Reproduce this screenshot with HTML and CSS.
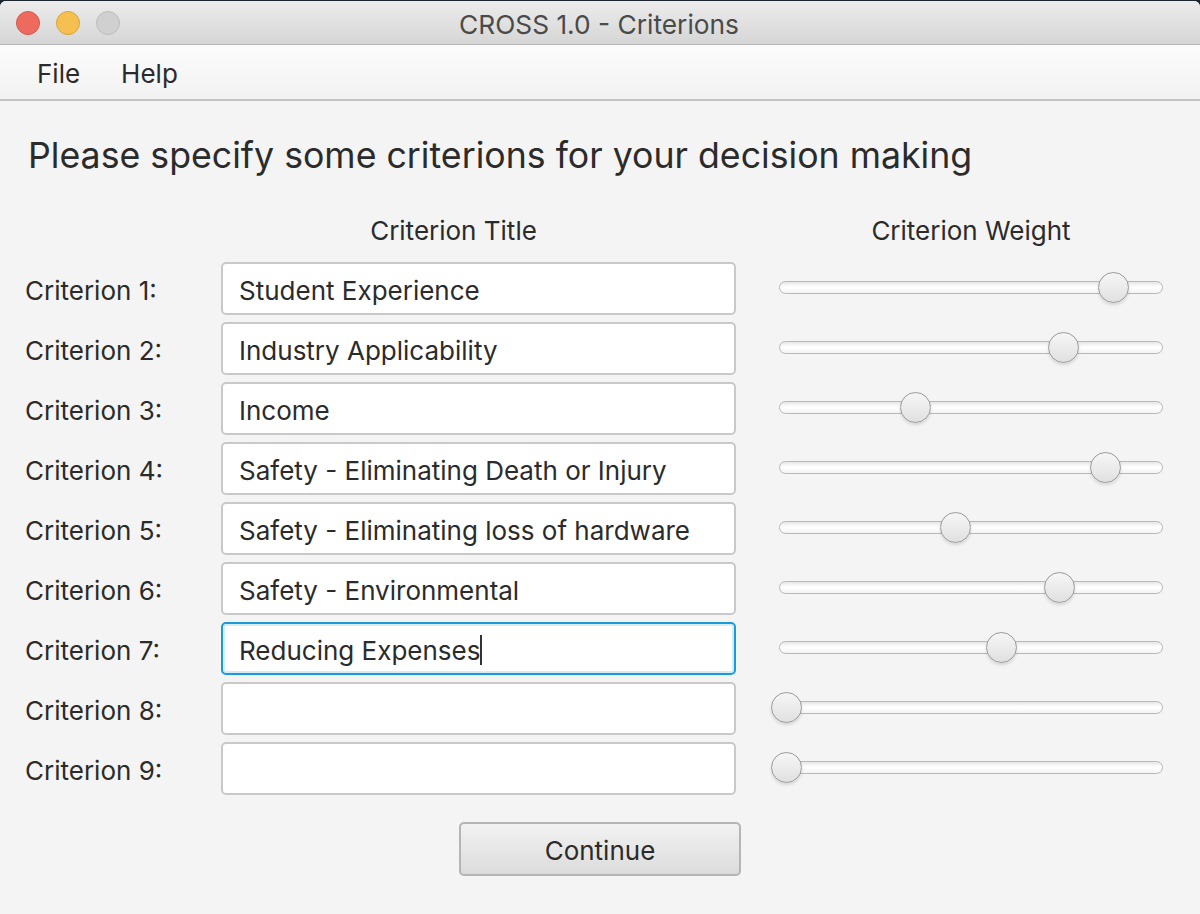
FILE: index.html
```html
<!DOCTYPE html>
<html>
<head>
<meta charset="utf-8">
<title>CROSS 1.0 - Criterions</title>
<link rel="stylesheet" href="styles.css">
</head>
<body>
<div class="window">
  <div class="titlebar">
    <div class="lights">
      <span class="light red"></span>
      <span class="light yellow"></span>
      <span class="light gray"></span>
    </div>
    <div class="title">CROSS 1.0 - Criterions</div>
  </div>
  <div class="menubar">
    <span class="menu">File</span>
    <span class="menu">Help</span>
  </div>
  <div class="content">
    <h1 class="heading">Please specify some criterions for your decision making</h1>
    <div class="grid">
      <div></div>
      <div class="colhead title-head">Criterion Title</div>
      <div class="colhead weight-head">Criterion Weight</div>

      <div class="label">Criterion 1:</div>
      <div class="field">Student Experience</div>
      <div class="slider"><div class="track"></div><div class="thumb" style="left:327px"></div></div>

      <div class="label">Criterion 2:</div>
      <div class="field">Industry Applicability</div>
      <div class="slider"><div class="track"></div><div class="thumb" style="left:277px"></div></div>

      <div class="label">Criterion 3:</div>
      <div class="field">Income</div>
      <div class="slider"><div class="track"></div><div class="thumb" style="left:129px"></div></div>

      <div class="label">Criterion 4:</div>
      <div class="field">Safety - Eliminating Death or Injury</div>
      <div class="slider"><div class="track"></div><div class="thumb" style="left:319px"></div></div>

      <div class="label">Criterion 5:</div>
      <div class="field">Safety - Eliminating loss of hardware</div>
      <div class="slider"><div class="track"></div><div class="thumb" style="left:169px"></div></div>

      <div class="label">Criterion 6:</div>
      <div class="field">Safety - Environmental</div>
      <div class="slider"><div class="track"></div><div class="thumb" style="left:273px"></div></div>

      <div class="label">Criterion 7:</div>
      <div class="field focused">Reducing Expenses<span class="caret"></span></div>
      <div class="slider"><div class="track"></div><div class="thumb" style="left:215px"></div></div>

      <div class="label">Criterion 8:</div>
      <div class="field"></div>
      <div class="slider"><div class="track"></div><div class="thumb" style="left:0px"></div></div>

      <div class="label">Criterion 9:</div>
      <div class="field"></div>
      <div class="slider"><div class="track"></div><div class="thumb" style="left:0px"></div></div>
    </div>
    <div class="actions">
      <button class="button">Continue</button>
    </div>
  </div>
</div>
</body>
</html>
```

FILE: styles.css
```css
html, body {
  margin: 0;
  padding: 0;
  background: #1c2733;
}
body {
  width: 1200px;
  height: 914px;
  overflow: hidden;
  font-family: Inter, Roboto, "Liberation Sans", sans-serif;
  color: #2b2b2b;
}
.window {
  width: 1200px;
  height: 913px;
  margin-top: 1px;
  background: #f4f4f4;
  border-radius: 6px 6px 0 0;
  overflow: hidden;
  display: flex;
  flex-direction: column;
}
.titlebar {
  height: 43px;
  background: linear-gradient(#ececec, #d6d6d6);
  border-bottom: 1px solid #b3b3b3;
  position: relative;
  display: flex;
  align-items: center;
  justify-content: center;
}
.lights {
  position: absolute;
  left: 16px;
  top: 10px;
  display: flex;
  gap: 16px;
}
.light {
  width: 24px;
  height: 24px;
  border-radius: 50%;
  box-sizing: border-box;
}
.red { background: #ed6a5e; border: 1px solid #d6564a; }
.yellow { background: #f5c04f; border: 1px solid #d9a33a; }
.gray { background: #d0d0d0; border: 1px solid #bcbcbc; }
.title {
  font-size: 26.3px;
  line-height: 30px;
  margin-top: 4px;
  margin-left: -2px;
  color: #4a4a4a;
}
.menubar {
  height: 56px;
  background: linear-gradient(#fcfcfc, #f2f2f2);
  border-bottom: 2px solid #c2c2c2;
  display: flex;
  align-items: center;
  padding-left: 37px;
  padding-top: 2px;
  box-sizing: border-box;
  gap: 41px;
}
.menu {
  font-size: 26px;
  color: #2b2b2b;
}
.content {
  flex: 1;
  display: flex;
  flex-direction: column;
}
.heading {
  margin: 34px 0 0 28px;
  font-weight: normal;
  font-size: 35.7px;
  line-height: 40px;
  height: 40px;
  color: #2b2b2b;
}
.grid {
  margin: 39px 0 0 25px;
  display: grid;
  grid-template-columns: 196px 515px 427px;
  column-gap: 0;
  row-gap: 7px;
  align-items: center;
}
.grid > .slider { margin-left: 43px; }
.colhead {
  font-size: 26px;
  line-height: 30px;
  text-align: center;
  margin-bottom: 9px;
  padding-top: 2px;
}
.title-head { padding-right: 50px; }
.weight-head { padding-left: 43px; }
.label {
  font-size: 26px;
  line-height: 49px;
  padding-top: 4px;
}
.field {
  height: 53px;
  box-sizing: border-box;
  background: #fff;
  border: 2px solid #c9c9c9;
  border-radius: 5px;
  padding-left: 16px;
  padding-top: 3px;
  font-size: 26px;
  display: flex;
  align-items: center;
  white-space: nowrap;
}
.field.focused {
  border: 2px solid #1a9cd8;
  box-shadow: inset 0 0 0 2px #d6edf8;
}
.caret {
  display: inline-block;
  width: 2px;
  height: 30px;
  background: #333;
}
.slider {
  position: relative;
  height: 53px;
}
.track {
  position: absolute;
  left: 0;
  right: 0;
  top: 19px;
  height: 13px;
  box-sizing: border-box;
  border: 1.5px solid #b8b8b8;
  border-radius: 7px;
  background: linear-gradient(#e6e6e6, #ffffff 45%, #f4f4f4);
}
.thumb {
  position: absolute;
  top: 10px;
  width: 31px;
  height: 31px;
  margin-left: -8px;
  box-sizing: border-box;
  border-radius: 50%;
  border: 1.5px solid #9a9a9a;
  background: linear-gradient(#f6f6f6, #e0e0e0);
  box-shadow: 0 2px 3px rgba(0,0,0,0.12);
}
.actions {
  display: flex;
  justify-content: center;
  margin-top: 27px;
}
.button {
  width: 282px;
  height: 54px;
  box-sizing: border-box;
  border: 2px solid #b5b5b5;
  border-radius: 5px;
  background: linear-gradient(#f2f2f2, #dcdcdc);
  font-family: Inter, Roboto, "Liberation Sans", sans-serif;
  font-size: 26px;
  color: #2b2b2b;
  padding: 2px 0 0 0;
}
```
